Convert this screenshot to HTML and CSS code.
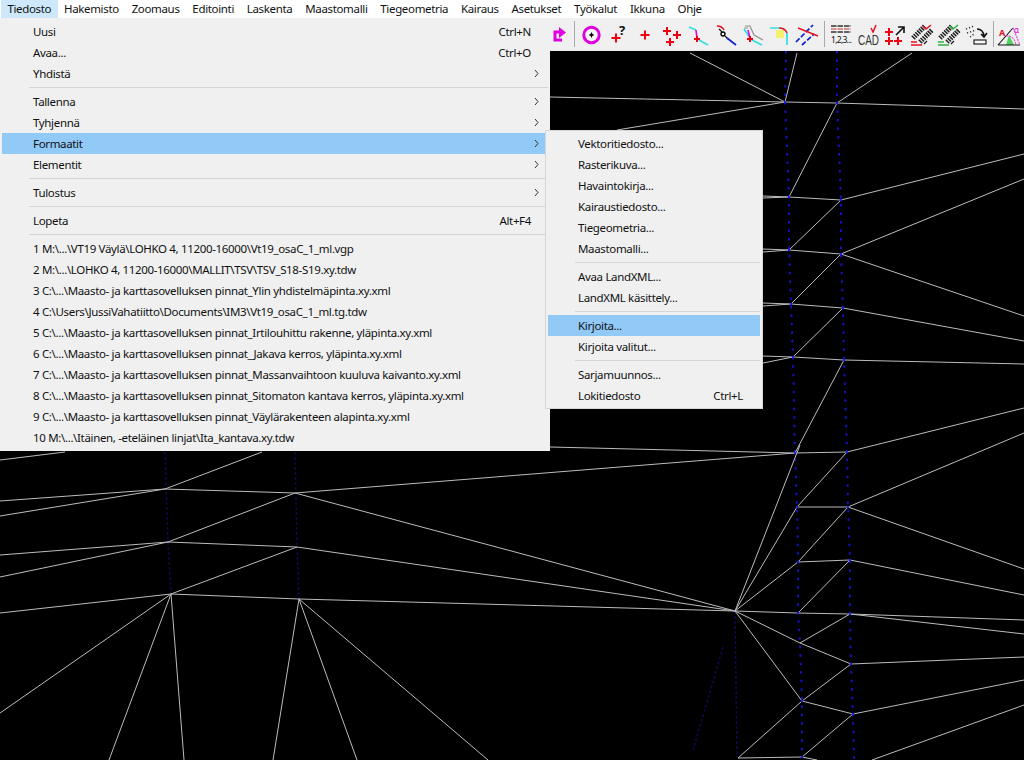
FILE: index.html
```html
<!DOCTYPE html>
<html lang="en">
<head>
    <meta charset="UTF-8">
    <title>Tiedosto</title>
    <link rel="stylesheet" href="styles.css">
</head>
<body>
    <div class="menubar">
        <span class="menubar-item active">Tiedosto</span>
        <span class="menubar-item">Hakemisto</span>
        <span class="menubar-item">Zoomaus</span>
        <span class="menubar-item">Editointi</span>
        <span class="menubar-item">Laskenta</span>
        <span class="menubar-item">Maastomalli</span>
        <span class="menubar-item">Tiegeometria</span>
        <span class="menubar-item">Kairaus</span>
        <span class="menubar-item">Asetukset</span>
        <span class="menubar-item">Työkalut</span>
        <span class="menubar-item">Ikkuna</span>
        <span class="menubar-item">Ohje</span>
    </div>

    <div class="toolbar">
        <svg class="tool" viewBox="0 0 27 27"><path class="magenta" d="M18 19H11V11H17"/><path class="magenta-fill" d="M15 6L22 11.5L15 17z"/></svg>
        <i class="tool-sep"></i>
        <svg class="tool" viewBox="0 0 27 27"><circle class="ring" cx="13.5" cy="14" r="7.7"/><path class="thin" d="M11 14H16M13.5 11.5V16.5"/><circle cx="13.5" cy="14" r="1.4"/></svg>
        <svg class="tool" viewBox="0 0 27 27"><path class="red" d="M6.5 17H15.5M11 12.5V21.5"/><text class="tool-q" x="14" y="14">?</text></svg>
        <svg class="tool" viewBox="0 0 27 27"><path class="red" d="M8.5 14H17.5M13 9.5V18.5"/></svg>
        <svg class="tool" viewBox="0 0 27 27"><path class="red" d="M4 10H12M8 6V14M14 14H22M18 10V18M7 21H15M11 17V25"/></svg>
        <svg class="tool" viewBox="0 0 27 27"><path class="cyan" d="M3 6L10 9M13 19L22 24"/><path class="magenta-thin" d="M10 9L11 17"/><path class="red" d="M8 18H14M11 15V21"/></svg>
        <svg class="tool" viewBox="0 0 27 27"><path class="red-thin" d="M4 5Q9 5 11 9"/><circle class="dot-ring" cx="10" cy="13" r="2"/><path class="thin" d="M6 8L9 11M12 15L15 18"/><path class="blue" d="M14 17L23 24"/></svg>
        <svg class="tool" viewBox="0 0 27 27"><path class="gray" d="M5 5H10L14 14L23 19M4 7H8"/><path class="cyan" d="M4 8L8 14L12 19L22 24"/><path class="magenta-thin" d="M8 9L10 17"/><path class="red" d="M7 18H13M10 15V21"/></svg>
        <svg class="tool" viewBox="0 0 27 27"><rect class="yellow" x="9" y="9" width="8" height="8"/><path class="cyan" d="M3 7H12M20 12V24"/><path class="red-thin" d="M12 7Q18 7 20 12"/></svg>
        <svg class="tool" viewBox="0 0 27 27"><path class="blue dashed" d="M2 21L19 4M8 24L20 13"/><path class="red-thin" d="M4 7L24 15"/></svg>
        <i class="tool-sep"></i>
        <svg class="tool" viewBox="0 0 27 27"><path class="grid-black" d="M3 5H23M3 11H23"/><path class="grid-red" d="M3 8H23"/><text class="tool-small" x="3" y="22" textLength="21">1,2,3...</text></svg>
        <svg class="tool" viewBox="0 0 27 27"><text class="tool-cad" x="3" y="24" textLength="21" lengthAdjust="spacingAndGlyphs">CAD</text><path class="red-thin" d="M16 7L18 11L21 4"/></svg>
        <svg class="tool" viewBox="0 0 27 27"><path class="red" d="M3 11H11M7 7V15M3 20H11M7 16V24M12 20H20M16 16V24"/><path class="arrow" d="M14 14L21 7M16 6H22V12"/></svg>
        <svg class="tool" viewBox="0 0 27 27"><path class="hatch" d="M4 17L16 5M11 21L23 9"/><path class="red-thin" d="M14 5L17 8L22 4M2 24H13M2 21H8"/><path class="thin" d="M15 23L18 20"/></svg>
        <svg class="tool" viewBox="0 0 27 27"><path class="hatch" d="M4 17L16 5M11 21L23 9"/><path class="green-thin" d="M14 5L17 8L22 4M2 24H13M2 21H8"/><path class="thin" d="M15 23L18 20"/></svg>
        <svg class="tool" viewBox="0 0 27 27"><path class="dots" d="M3 8L11 5M4 12L13 9M7 16L11 13"/><path class="arrow" d="M14 8Q20 8 21 15M18 13L21 16L24 12"/><rect class="tool-box" x="11" y="19" width="12" height="4"/></svg>
        <i class="tool-sep"></i>
        <svg class="tool" viewBox="0 0 27 27"><path class="green-fill" d="M9 24L12 14L17 24z"/><path class="thin" d="M1 24H23M1 24L16 7"/><path class="magenta-dash" d="M16 7L23 24M9 15Q17 14 19 24"/><text class="tool-a" x="2" y="15">A</text><text class="tool-alpha" x="17" y="12">α</text></svg>
    </div>

    <div class="canvas">
        <svg class="model" viewBox="0 51 1024 709">
            <!-- left columns -->
            <path class="line-faint" d="M165 452L168 542L171 594M295 452L297 547L299 599M735 611L737 757M723 647L693 750"/>
            <!-- right columns -->
            <path class="line-dotted" d="M786 51L785 102L789 197L789 250L791 304L793 357L795 453L797 507L798 562L798 613L800 643L802 701L802 757M837 51L837 103L841 200L841 254L843 308L844 360L847 452L848 507L850 560L850 614L851 664L853 714L854 760"/>
            <!-- triangle mesh -->
            <path class="line-mesh" d="M690 53L785 102M797 53L785 102M912 53L837 103M550 97L785 102L837 103L1024 109M617 130L785 102
                M837 103L789 197M763 196L789 197L841 200L1024 154M763 198L789 197M841 200L789 250M763 249L789 250L841 254L1024 179M763 252L789 250M841 254L1024 316
                M841 254L791 304M763 303L791 304L843 308L1024 341M763 306L791 304M843 308L793 357M763 356L793 357L844 360L1024 364M763 363L793 357M844 360L795 453
                M550 447L795 453L847 452L1024 408M847 452L797 507L848 507L1024 433M848 507L798 562L850 560L1024 595M848 507L1024 569M850 560L798 613L850 614L1024 620M850 614L1024 634
                M850 614L800 643L851 664L1024 657M851 664L802 701L853 714L1024 680M853 714L802 757M802 701L738 758L802 757L817 760M872 760L1024 705
                M735 611L800 445M735 611L797 507M735 611L798 562M735 611L798 613M735 611L800 643M735 611L802 701
                M65 452L0 460M262 452L165 489L0 501M165 489L0 516M165 489L295 493L795 453M295 493L168 542M295 493L735 611
                M168 542L0 555M168 542L0 577M168 542L297 547L735 611M297 547L171 594L0 613M171 594L299 599L735 611
                M171 594L0 713M171 594L109 760M171 594L184 760M299 599L273 760M299 599L357 760M299 599L488 760"/>
            <path class="line-node" d="M785 102h.01M789 197h.01M789 250h.01M791 304h.01M793 357h.01M795 453h.01M797 507h.01M798 562h.01M798 613h.01M802 701h.01M802 757h.01M837 103h.01M841 200h.01M841 254h.01M843 308h.01M844 360h.01M847 452h.01M848 507h.01M850 560h.01M850 614h.01M851 664h.01M853 714h.01"/>
        </svg>
    </div>

    <div class="menu menu-main">
        <div class="menu-row"><span>Uusi</span><span>Ctrl+N</span></div>
        <div class="menu-row"><span>Avaa...</span><span>Ctrl+O</span></div>
        <div class="menu-row has-sub"><span>Yhdistä</span><svg class="chevron" viewBox="0 0 5 9"><path d="M1 1L4 4.5L1 8"/></svg></div>
        <div class="menu-sep"></div>
        <div class="menu-row has-sub"><span>Tallenna</span><svg class="chevron" viewBox="0 0 5 9"><path d="M1 1L4 4.5L1 8"/></svg></div>
        <div class="menu-row has-sub"><span>Tyhjennä</span><svg class="chevron" viewBox="0 0 5 9"><path d="M1 1L4 4.5L1 8"/></svg></div>
        <div class="menu-row has-sub selected"><span>Formaatit</span><svg class="chevron" viewBox="0 0 5 9"><path d="M1 1L4 4.5L1 8"/></svg></div>
        <div class="menu-row has-sub"><span>Elementit</span><svg class="chevron" viewBox="0 0 5 9"><path d="M1 1L4 4.5L1 8"/></svg></div>
        <div class="menu-sep"></div>
        <div class="menu-row has-sub"><span>Tulostus</span><svg class="chevron" viewBox="0 0 5 9"><path d="M1 1L4 4.5L1 8"/></svg></div>
        <div class="menu-sep"></div>
        <div class="menu-row"><span>Lopeta</span><span>Alt+F4</span></div>
        <div class="menu-sep"></div>
        <div class="menu-row"><span>1 M:\...\VT19 Väylä\LOHKO 4, 11200-16000\Vt19_osaC_1_ml.vgp</span></div>
        <div class="menu-row"><span>2 M:\...\LOHKO 4, 11200-16000\MALLIT\TSV\TSV_S18-S19.xy.tdw</span></div>
        <div class="menu-row"><span>3 C:\...\Maasto- ja karttasovelluksen pinnat_Ylin yhdistelmäpinta.xy.xml</span></div>
        <div class="menu-row"><span>4 C:\Users\JussiVahatiitto\Documents\IM3\Vt19_osaC_1_ml.tg.tdw</span></div>
        <div class="menu-row"><span>5 C:\...\Maasto- ja karttasovelluksen pinnat_Irtilouhittu rakenne, yläpinta.xy.xml</span></div>
        <div class="menu-row"><span>6 C:\...\Maasto- ja karttasovelluksen pinnat_Jakava kerros, yläpinta.xy.xml</span></div>
        <div class="menu-row"><span>7 C:\...\Maasto- ja karttasovelluksen pinnat_Massanvaihtoon kuuluva kaivanto.xy.xml</span></div>
        <div class="menu-row"><span>8 C:\...\Maasto- ja karttasovelluksen pinnat_Sitomaton kantava kerros, yläpinta.xy.xml</span></div>
        <div class="menu-row"><span>9 C:\...\Maasto- ja karttasovelluksen pinnat_Väylärakenteen alapinta.xy.xml</span></div>
        <div class="menu-row"><span>10 M:\...\Itäinen, -eteläinen linjat\Ita_kantava.xy.tdw</span></div>
    </div>

    <div class="menu menu-sub">
        <div class="menu-row"><span>Vektoritiedosto...</span></div>
        <div class="menu-row"><span>Rasterikuva...</span></div>
        <div class="menu-row"><span>Havaintokirja...</span></div>
        <div class="menu-row"><span>Kairaustiedosto...</span></div>
        <div class="menu-row"><span>Tiegeometria...</span></div>
        <div class="menu-row"><span>Maastomalli...</span></div>
        <div class="menu-sep"></div>
        <div class="menu-row"><span>Avaa LandXML...</span></div>
        <div class="menu-row"><span>LandXML käsittely...</span></div>
        <div class="menu-sep"></div>
        <div class="menu-row selected"><span>Kirjoita...</span></div>
        <div class="menu-row"><span>Kirjoita valitut...</span></div>
        <div class="menu-sep"></div>
        <div class="menu-row"><span>Sarjamuunnos...</span></div>
        <div class="menu-row"><span>Lokitiedosto</span><span>Ctrl+L</span></div>
    </div>
</body>
</html>
```

FILE: styles.css
```css
* {
    margin: 0;
    padding: 0;
    box-sizing: border-box;
    font-family: "Noto Sans", sans-serif;
}

html, body {
    height: 100%;
    overflow: hidden;
}

body {
    display: flex;
    flex-direction: column;
    background-color: #000;
    color: #111;
    font-size: 11.5px;
    letter-spacing: -0.34px;
}

.menubar {
    display: flex;
    flex: none;
    height: 18px;
    padding-left: 1px;
    background-color: #fff;
    line-height: 17px;
}

.menubar-item {
    padding: 0 6.4px;
}

.menubar-item.active {
    background-color: #cce8fa;
}

.toolbar {
    display: flex;
    flex: none;
    justify-content: flex-end;
    align-items: center;
    height: 33px;
    background-color: #f0f0f0;
    border-bottom: 1px solid #e8e8e8;
    letter-spacing: 0;
}

.tool {
    flex: none;
    width: 27px;
    height: 27px;
    fill: none;
    overflow: visible;
}

.tool-sep {
    flex: none;
    width: 1px;
    height: 26px;
    margin: 0 3px;
    background-color: #a8a8a8;
}

.tool circle { fill: #000; }
.tool .ring { fill: #f6f6f6; stroke: #e000e0; stroke-width: 3; }
.tool .dot-ring { fill: none; stroke: #000; stroke-width: 1.3; }

.magenta { stroke: #e000e0; stroke-width: 3; }
.magenta-fill { fill: #e000e0; }
.magenta-thin { stroke: #e000e0; stroke-width: 1.6; }
.magenta-dash { stroke: #e050d8; stroke-width: 1.2; stroke-dasharray: 2 1; }
.red { stroke: #f00010; stroke-width: 2; }
.red-thin { stroke: #e81020; stroke-width: 1.5; }
.cyan { stroke: #30e0e0; stroke-width: 1.7; }
.blue { stroke: #1020d0; stroke-width: 1.7; }
.dashed { stroke-dasharray: 5 2; }
.gray { stroke: #909090; stroke-width: 1.2; }
.yellow { fill: #f4f070; }
.thin { stroke: #111; stroke-width: 1.1; }
.arrow { stroke: #111; stroke-width: 1.6; }
.grid-black { stroke: #333; stroke-width: 1.5; stroke-dasharray: 5.5 1; }
.grid-red { stroke: #c83030; stroke-width: 1.2; stroke-dasharray: 5.5 1; }
.hatch { stroke: #222; stroke-width: 5; stroke-dasharray: 1.5 1; }
.green-thin { stroke: #30b040; stroke-width: 1.5; }
.green-fill { fill: #50d060; }
.dots { stroke: #333; stroke-width: 1.5; stroke-dasharray: 1.2 2; }
.tool-box { fill: #f8f8f8; stroke: #222; stroke-width: 1.2; }

.tool-q { font-size: 13px; font-weight: bold; fill: #111; }
.tool-small { font-size: 8.5px; fill: #111; }
.tool-cad { font-size: 14px; fill: #333; font-family: "Liberation Sans", sans-serif; }
.tool-a { font-size: 9px; font-weight: bold; fill: #e01020; }
.tool-alpha { font-size: 8px; fill: #e000e0; }

.canvas {
    flex: 1;
    min-height: 0;
}

.model {
    display: block;
    width: 100%;
    height: 100%;
    fill: none;
}

.line-mesh { stroke: #bcbcbc; stroke-width: 1; }
.line-dotted { stroke: #1212c0; stroke-width: 2; stroke-dasharray: 2.5 6; }
.line-faint { stroke: #0a0a50; stroke-width: 1.5; stroke-dasharray: 3 2; }
.line-node { stroke: #2020e0; stroke-width: 2.6; stroke-linecap: round; }

/* Dropdown menus */
.menu {
    position: absolute;
    background-color: #f0f0f0;
}

.menu-main {
    top: 18px;
    left: 0;
    width: 550px;
    padding: 3px 2px;
}

.menu-sub {
    top: 130px;
    left: 545px;
    width: 218px;
    padding: 3px;
    box-shadow: inset 0 0 0 1px #d6d6d6;
}

.menu-row {
    display: flex;
    justify-content: space-between;
    align-items: center;
    height: 21px;
    padding: 0 17px 1px 30px;
    white-space: nowrap;
}

.menu-main .menu-row {
    padding-left: 31px;
}

.menu-main .menu-row.has-sub {
    padding-right: 9px;
}

.menu-row.selected {
    background-color: #91c9f7;
}

.chevron {
    width: 5px;
    height: 9px;
    fill: none;
    stroke: #333;
}

.menu-sep {
    height: 1px;
    margin: 3px 0 3px 27px;
    background-color: #d4d4d4;
}
```
